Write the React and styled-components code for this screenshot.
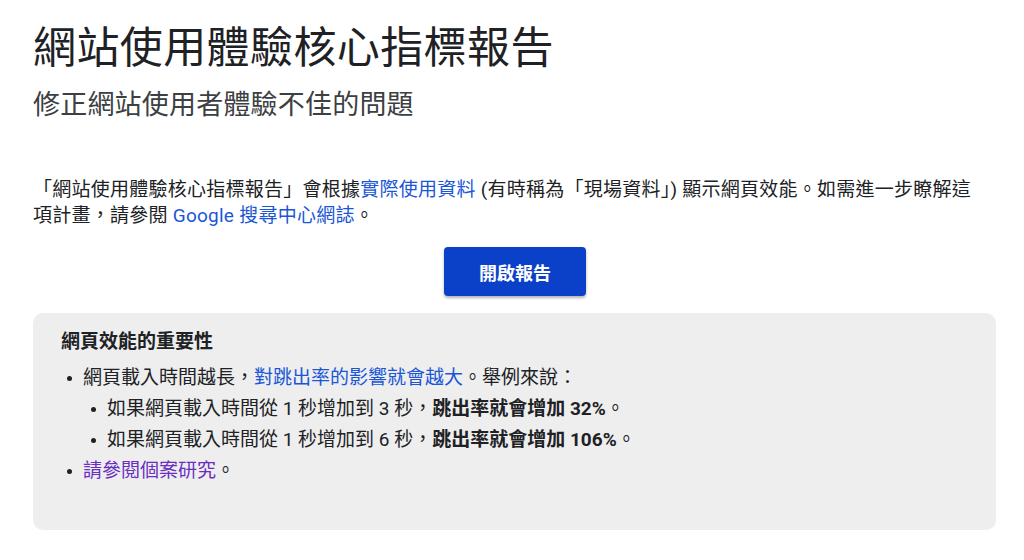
import React from "react";
import styled, { createGlobalStyle } from "styled-components";

const Global = createGlobalStyle`
  html, body { margin: 0; padding: 0; background: #ffffff; }
  body {
    font-family: Roboto, "Noto Sans CJK TC", "Noto Sans", sans-serif;
    color: #202124;
    -webkit-font-smoothing: antialiased;
  }
`;

const Page = styled.main`
  box-sizing: border-box;
  width: 1030px;
  padding: 22px 0 0 33px;
  display: flex;
  flex-direction: column;
`;

const Title = styled.h1`
  margin: 0;
  font-size: 43px;
  line-height: 52px;
  font-weight: 400;
  color: #202124;
  letter-spacing: 0.4px;
`;

const Subtitle = styled.h2`
  margin: 13px 0 0;
  font-size: 27px;
  line-height: 36px;
  font-weight: 400;
  color: #3c4043;
  letter-spacing: 0.2px;
`;

const Paragraph = styled.p`
  margin: 54px 0 0;
  width: 950px;
  font-size: 19px;
  line-height: 26px;
  letter-spacing: 0.25px;
  color: #202124;
`;

const Link = styled.a`
  color: ${(p) => (p.$visited ? "#6a2fc1" : "#1a56d6")};
  text-decoration: none;
`;

const ButtonRow = styled.div`
  display: flex;
  justify-content: center;
  width: 963px;
  margin-top: 18px;
`;

const Button = styled.button`
  width: 142px;
  height: 49px;
  border: none;
  border-radius: 4px;
  background: #0b41c8;
  color: #ffffff;
  font-family: Roboto, "Noto Sans CJK TC", sans-serif;
  font-size: 18px;
  font-weight: 700;
  box-shadow: 0 2px 3px rgba(0, 0, 0, 0.3);
  cursor: pointer;
  margin-left: 1px;
`;

const Aside = styled.section`
  box-sizing: border-box;
  width: 963px;
  margin-top: 17px;
  padding: 14px 28px 44px;
  background: #eeeeee;
  border-radius: 10px;
`;

const AsideTitle = styled.h3`
  margin: 0;
  font-size: 19px;
  line-height: 30px;
  font-weight: 700;
  color: #202124;
`;

const List = styled.ul`
  list-style: none;
  margin: ${(p) => (p.$nested ? "0" : "5px 0 0")};
  padding: 0 0 0 ${(p) => (p.$nested ? "24px" : "0")};
`;

const Item = styled.li`
  position: relative;
  padding-left: 22px;
  font-size: 19px;
  line-height: 31px;
  color: #202124;
  &::before {
    content: "";
    position: absolute;
    left: 6px;
    top: 14px;
    width: 5px;
    height: 5px;
    border-radius: 50%;
    background: #202124;
  }
`;

const Strong = styled.strong`
  font-weight: 700;
`;

export default function App() {
  return (
    <>
      <Global />
      <Page>
        <Title>網站使用體驗核心指標報告</Title>
        <Subtitle>修正網站使用者體驗不佳的問題</Subtitle>
        <Paragraph>
          「網站使用體驗核心指標報告」會根據<Link href="#">實際使用資料</Link> (有時稱為「現場資料」) 顯示網頁效能。如需進一步瞭解這項計畫，請參閱 <Link href="#">Google 搜尋中心網誌</Link>。
        </Paragraph>
        <ButtonRow>
          <Button>開啟報告</Button>
        </ButtonRow>
        <Aside>
          <AsideTitle>網頁效能的重要性</AsideTitle>
          <List>
            <Item>
              網頁載入時間越長，<Link href="#">對跳出率的影響就會越大</Link>。舉例來說：
            </Item>
            <List $nested>
              <Item>
                如果網頁載入時間從 1 秒增加到 3 秒，<Strong>跳出率就會增加 32%</Strong>。
              </Item>
              <Item>
                如果網頁載入時間從 1 秒增加到 6 秒，<Strong>跳出率就會增加 106%</Strong>。
              </Item>
            </List>
            <Item>
              <Link href="#" $visited>請參閱個案研究</Link>。
            </Item>
          </List>
        </Aside>
      </Page>
    </>
  );
}
